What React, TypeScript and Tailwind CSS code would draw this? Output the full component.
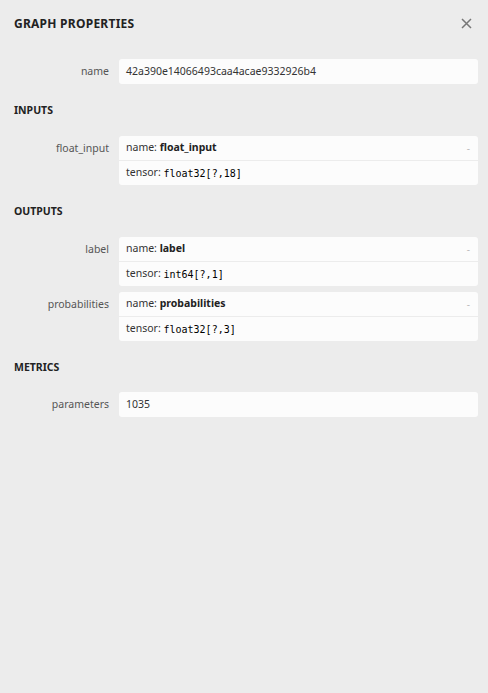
import React from "react";

const sans = { fontFamily: '"Noto Sans", "Open Sans", sans-serif' };

const Heading = ({ title, className }: { title: string; className: string }) => (
  <div className={`px-[14px] h-[20px] flex items-center text-[10.5px] font-bold text-[#222] ${className}`}>
    {title}
  </div>
);

const Row = ({ label, children, className }: { label: string; children: React.ReactNode; className: string }) => (
  <div className={`flex pr-[10px] ${className}`}>
    <div className="w-[109px] text-right leading-[25px] text-[10.5px] text-[#555] shrink-0">{label}</div>
    <div className="ml-[10px] flex-1 bg-[#fcfcfc] rounded-[3px]">{children}</div>
  </div>
);

const Arg = ({ name, type }: { name: string; type: string }) => (
  <div className="text-[10.5px] text-[#333]">
    <div className="h-[25px] flex items-center justify-between pl-[7px] pr-[8px] border-b border-[#ececec]">
      <span>
        name: <b className="font-bold text-[#222]">{name}</b>
      </span>
      <span className="text-[#bbb] text-[10px]">-</span>
    </div>
    <div className="h-[24px] flex items-center pl-[7px]">
      tensor:&nbsp;
      <code
        className="text-[10px] text-[#000]"
        style={{ fontFamily: '"DejaVu Sans Mono", "Liberation Mono", monospace' }}
      >
        {type}
      </code>
    </div>
  </div>
);

export default function App() {
  return (
    <div className="w-[488px] h-[693px] bg-[#ececec]" style={sans}>
      <div className="h-[48px] flex items-center justify-between pl-[14px] pr-[16px]">
        <div className="text-[12px] font-bold text-[#222] tracking-[0.25px]">GRAPH PROPERTIES</div>
        <svg width="11" height="11" viewBox="0 0 11 11" className="mt-[-1px]">
          <path d="M1 1 L10 10 M10 1 L1 10" stroke="#777" strokeWidth="1.5" />
        </svg>
      </div>

      <Row label="name" className="mt-[11px]">
        <div className="h-[25px] flex items-center pl-[7px] text-[10.5px] text-[#333]">
          42a390e14066493caa4acae9332926b4
        </div>
      </Row>

      <Heading title="INPUTS" className="mt-[17px]" />
      <Row label="float_input" className="mt-[15px]">
        <Arg name="float_input" type="float32[?,18]" />
      </Row>

      <Heading title="OUTPUTS" className="mt-[17px]" />
      <Row label="label" className="mt-[15px]">
        <Arg name="label" type="int64[?,1]" />
      </Row>
      <Row label="probabilities" className="mt-[6px]">
        <Arg name="probabilities" type="float32[?,3]" />
      </Row>

      <Heading title="METRICS" className="mt-[17px]" />
      <Row label="parameters" className="mt-[14px]">
        <div className="h-[25px] flex items-center pl-[7px] text-[10.5px] text-[#333]">1035</div>
      </Row>
    </div>
  );
}
